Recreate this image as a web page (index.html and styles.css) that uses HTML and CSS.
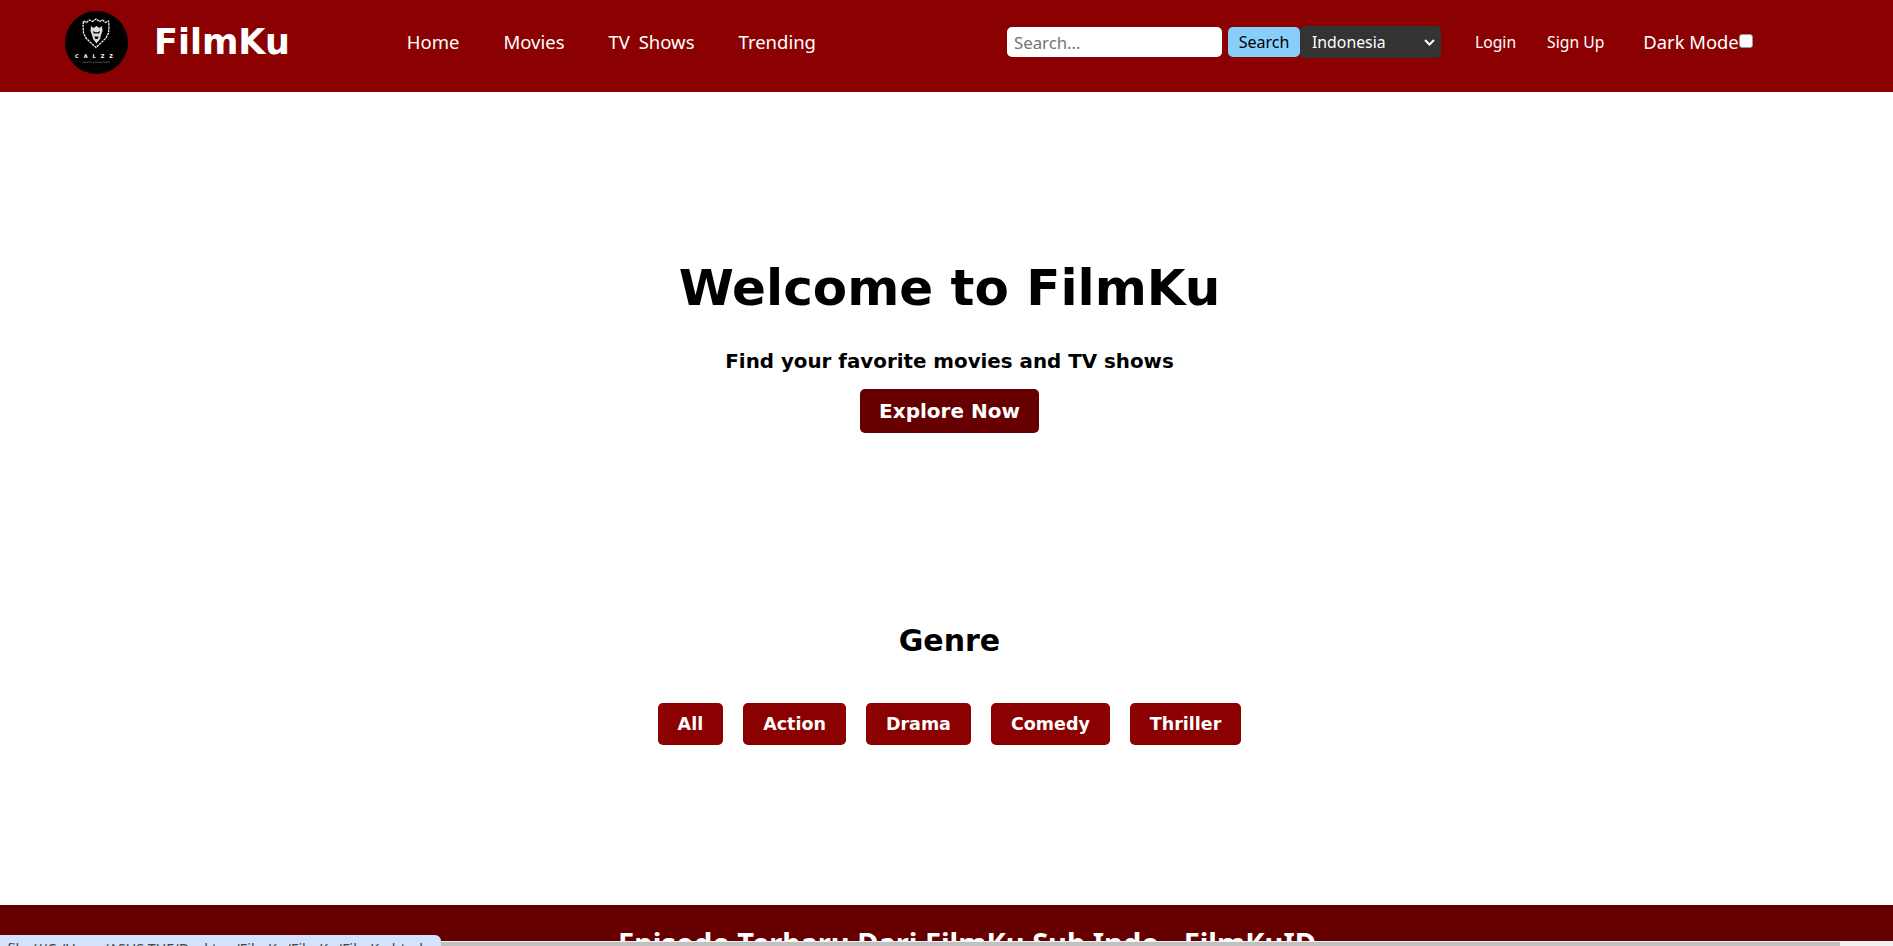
FILE: index.html
```html
<!DOCTYPE html>
<html lang="id">
<head>
<meta charset="utf-8">
<title>FilmKu</title>
<link rel="stylesheet" href="styles.css">
</head>
<body>
<header class="header">
  <svg class="logo" viewBox="0 0 63 63" role="img" aria-label="Calzz logo">
    <circle cx="31.5" cy="31.5" r="31.5" fill="#000"/>
    <path d="M18.500 10l3 1.500 3-2.500 3 1.500 3.500-2.500 3.500 2.500 3-1.500 3 2.500 3-1.500.5 5-.5 7-2.500 5-4 4-6 5.500-6-5.500-4-4-2.500-5-.5-7z" fill="none" stroke="#eee" stroke-width="1.300" stroke-dasharray="2.500 .7"/>
    <path d="M26 15l2.500 2 3-2 3 2 2.500-2 .5 5-1.500 4-1 4-3.500 4.500-3.500-4.500-1-4-1.500-4z" fill="#ddd"/>
    <path d="M27.800 20l2.700 1.200h2l2.700-1.200-1 2.500h-5.400zM29.300 25.500h4.400l-1 2.500h-2.400z" fill="#000"/>
    <text class="logo-name" x="31.500" y="47">CALZZ</text>
    <text class="logo-sub" x="31.500" y="52">Outfit Consultant</text>
  </svg>
  <div class="brand">FilmKu</div>
  <nav class="nav">
    <a class="nav-link">Home</a>
    <a class="nav-link">Movies</a>
    <a class="nav-link">TV Shows</a>
    <a class="nav-link">Trending</a>
  </nav>
  <div class="tools">
    <input class="search-input" type="text" placeholder="Search...">
    <button class="search-btn" type="button">Search</button>
    <select class="country"><option>Indonesia</option></select>
  </div>
  <div class="auth">
    <a class="auth-link">Login</a>
    <a class="auth-link">Sign Up</a>
  </div>
  <label class="dark-toggle">Dark Mode<input class="dark-check" type="checkbox"></label>
</header>

<main>
  <section class="hero">
    <h1 class="hero-title">Welcome to FilmKu</h1>
    <p class="hero-sub">Find your favorite movies and TV shows</p>
    <button class="hero-btn" type="button">Explore Now</button>
  </section>
  <section class="genre">
    <h2 class="genre-title">Genre</h2>
    <div class="genre-list">
      <button class="genre-btn" type="button">All</button>
      <button class="genre-btn" type="button">Action</button>
      <button class="genre-btn" type="button">Drama</button>
      <button class="genre-btn" type="button">Comedy</button>
      <button class="genre-btn" type="button">Thriller</button>
    </div>
  </section>
  <section class="latest">
    <h2 class="latest-title">Episode Terbaru Dari FilmKu Sub Indo - FilmKuID</h2>
  </section>
</main>

<div class="scrollbar"><div class="scrollbar-thumb"></div></div>
<div class="status-tip">file:///C:/Users/ASUS TUF/Desktop/FilmKu/FilmKu/FilmKu.html</div>
</body>
</html>
```

FILE: styles.css
```css
html, body {
  margin: 0;
  height: 946px;
  overflow: hidden;
  background: #fff;
}

body {
  font-family: "DejaVu Sans", Verdana, sans-serif;
  color: #000;
}

.header {
  display: flex;
  align-items: center;
  height: 92px;
  padding-left: 65px;
  padding-bottom: 8px;
  background: #8b0000;
  color: #fff;
  box-sizing: border-box;
}

.logo {
  width: 63px;
  height: 63px;
  flex: none;
}

.logo-name {
  fill: #fff;
  font: 700 5px "DejaVu Sans", sans-serif;
  letter-spacing: 5px;
  text-anchor: middle;
}

.logo-sub {
  fill: #bbb;
  font: 400 2.500px "DejaVu Sans", sans-serif;
  letter-spacing: .4px;
  text-anchor: middle;
}

.brand {
  margin-left: 26px;
  font-size: 35px;
  font-weight: 700;
}

.nav {
  display: flex;
  gap: 44px;
  margin-left: 117px;
  padding-bottom: 2px;
}

.nav-link {
  font: 400 18.500px "Noto Sans", sans-serif;
  word-spacing: 4px;
}

.tools {
  display: flex;
  align-items: center;
  margin-left: 191px;
}

.search-input {
  width: 215px;
  height: 30px;
  padding: 0 7px;
  margin-right: 6px;
  border: 0;
  border-radius: 5px;
  box-sizing: border-box;
  background: #fff;
  font: 400 16.800px "Noto Sans", sans-serif;
}

.search-input::placeholder {
  color: #757575;
}

.search-btn {
  width: 72px;
  height: 30px;
  padding: 0;
  border: 0;
  border-radius: 5px;
  background: #87cefa;
  color: #000;
  font: 400 16px "Noto Sans", sans-serif;
}

.country {
  width: 141px;
  height: 32px;
  padding-left: 12px;
  border: 0;
  border-radius: 5px;
  appearance: none;
  background-color: #333;
  background-image: url("data:image/svg+xml,%3Csvg xmlns='http://www.w3.org/2000/svg' viewBox='0 0 11 7'%3E%3Cpath d='M1 1l4.500 4.500L10 1' fill='none' stroke='%23fff' stroke-width='2'/%3E%3C/svg%3E");
  background-repeat: no-repeat;
  background-position: right 6px center;
  background-size: 11px 7px;
  color: #fff;
  font: 400 15.800px "Noto Sans", sans-serif;
}

.auth {
  display: flex;
  gap: 31px;
  margin-left: 34px;
}

.auth-link {
  font: 400 15.700px "Noto Sans", sans-serif;
}

.dark-toggle {
  display: flex;
  align-items: center;
  margin-left: 39px;
  padding-bottom: 2px;
  font: 400 18.400px "Noto Sans", sans-serif;
}

.dark-check {
  width: 14px;
  height: 14px;
  margin: 0;
  appearance: none;
  border: 1px solid #999;
  border-radius: 3px;
  background: #fff;
}

.hero {
  display: flex;
  flex-direction: column;
  align-items: center;
  padding-top: 161px;
  padding-left: 6px;
}

.hero-title {
  margin: 0;
  font-size: 50px;
  line-height: 70px;
  font-weight: 700;
}

.hero-sub {
  margin: 27px 0 0;
  font-size: 19.850px;
  line-height: 24px;
  font-weight: 700;
}

.hero-btn {
  margin-top: 15px;
  width: 179px;
  height: 44px;
  padding: 0;
  border: 0;
  border-radius: 5px;
  background: #660000;
  color: #fff;
  font: 700 20px "DejaVu Sans", sans-serif;
}

.genre {
  display: flex;
  flex-direction: column;
  align-items: center;
  padding-top: 188px;
  padding-left: 6px;
}

.genre-title {
  margin: 0;
  font-size: 30px;
  line-height: 40px;
  font-weight: 700;
}

.genre-list {
  display: flex;
  gap: 20px;
  margin-top: 42px;
}

.genre-btn {
  height: 42px;
  padding: 0 20px;
  border: 0;
  border-radius: 5px;
  background: #8b0000;
  color: #fff;
  font: 700 17.500px "DejaVu Sans", sans-serif;
}

.latest {
  margin-top: 160px;
  height: 60px;
  padding-top: 19px;
  padding-left: 41px;
  box-sizing: border-box;
  background: #660000;
  text-align: center;
}

.latest-title {
  margin: 0;
  color: #fff;
  font: 700 29px/38px "Noto Sans", sans-serif;
}

.scrollbar {
  position: fixed;
  left: 0;
  right: 0;
  bottom: 0;
  height: 5px;
  box-sizing: border-box;
  border-top: 1px solid #f1f1f1;
  background: #f1f1f1;
}

.scrollbar-thumb {
  width: 1840px;
  height: 100%;
  background: #c1c1c1;
}

.status-tip {
  position: fixed;
  left: 0;
  bottom: -16px;
  width: 441px;
  height: 27px;
  padding: 4px 0 0 7px;
  box-sizing: border-box;
  border-top-right-radius: 6px;
  background: #d3e3fd;
  color: #444;
  font: 400 14.300px/19px "Noto Sans", sans-serif;
  white-space: nowrap;
  overflow: hidden;
}
```
